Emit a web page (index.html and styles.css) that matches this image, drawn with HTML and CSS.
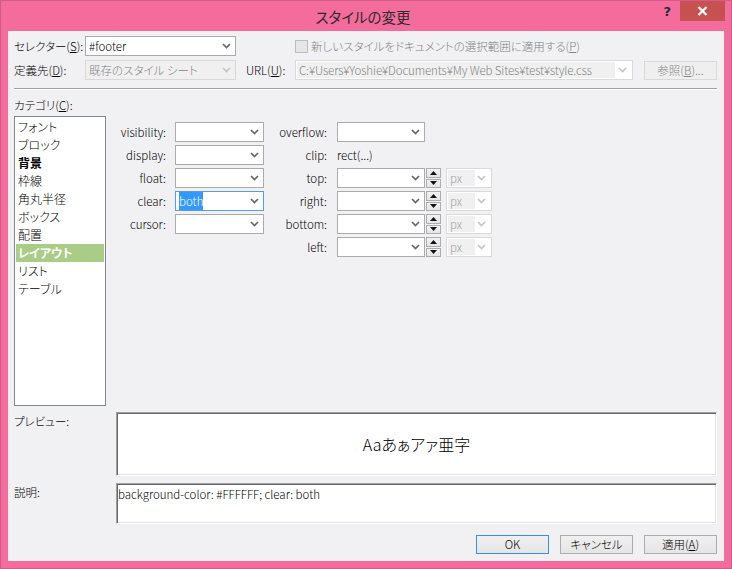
FILE: index.html
```html
<!DOCTYPE html>
<html lang="ja">
<head>
<meta charset="utf-8">
<title>スタイルの変更</title>
<link rel="stylesheet" href="styles.css">
</head>
<body>
<div class="window">
  <div class="titlebar">
    <div></div>
    <div class="title">スタイルの変更</div>
    <div class="controls">
      <span class="help">?</span>
      <span class="close"><svg width="11" height="10" viewBox="0 0 11 10"><path d="M1.5 1l8 8M9.5 1l-8 8" stroke="#fff" stroke-width="2.2" fill="none"/></svg></span>
    </div>
  </div>
  <div class="client">
    <div class="toprows">
      <label class="lbl">セレクター(<u>S</u>):</label>
      <div class="combo"><span class="val">#footer</span><svg class="chev" width="9" height="6" viewBox="0 0 9 6"><path d="M1 1l3.5 3.5L8 1" fill="none" stroke="#666" stroke-width="1.7"/></svg></div>
      <div class="check-wrap"><span class="checkbox"></span><span class="dis">新しいスタイルをドキュメントの選択範囲に適用する(<u>P</u>)</span></div>

      <label class="lbl">定義先(<u>D</u>):</label>
      <div class="combo disabled"><span class="val">既存のスタイル シート</span><svg class="chev" width="9" height="6" viewBox="0 0 9 6"><path d="M1 1l3.5 3.5L8 1" fill="none" stroke="#c4c4c4" stroke-width="1.7"/></svg></div>
      <label class="lbl url-lbl">URL(<u>U</u>):</label>
      <div class="urlbox"><span class="urltext">C:¥Users¥Yoshie¥Documents¥My Web Sites¥test¥style.css</span><svg class="chev" width="9" height="6" viewBox="0 0 9 6"><path d="M1 1l3.5 3.5L8 1" fill="none" stroke="#c4c4c4" stroke-width="1.7"/></svg></div>
      <div class="btn browse">参照(<u>B</u>)...</div>
    </div>

    <div class="sep"></div>

    <div class="catlabel">カテゴリ(<u>C</u>):</div>
    <div class="middle">
      <ul class="catlist">
        <li>フォント</li>
        <li>ブロック</li>
        <li class="bold">背景</li>
        <li>枠線</li>
        <li>角丸半径</li>
        <li>ボックス</li>
        <li>配置</li>
        <li class="sel">レイアウト</li>
        <li>リスト</li>
        <li>テーブル</li>
      </ul>

      <div class="formL">
        <span class="flbl">visibility:</span>
        <div class="combo"><span class="val"></span><svg class="chev" width="9" height="6" viewBox="0 0 9 6"><path d="M1 1l3.5 3.5L8 1" fill="none" stroke="#666" stroke-width="1.7"/></svg></div>
        <span class="flbl">display:</span>
        <div class="combo"><span class="val"></span><svg class="chev" width="9" height="6" viewBox="0 0 9 6"><path d="M1 1l3.5 3.5L8 1" fill="none" stroke="#666" stroke-width="1.7"/></svg></div>
        <span class="flbl">float:</span>
        <div class="combo"><span class="val"></span><svg class="chev" width="9" height="6" viewBox="0 0 9 6"><path d="M1 1l3.5 3.5L8 1" fill="none" stroke="#666" stroke-width="1.7"/></svg></div>
        <span class="flbl">clear:</span>
        <div class="combo focus"><span class="val"><span class="hl">both</span></span><svg class="chev" width="9" height="6" viewBox="0 0 9 6"><path d="M1 1l3.5 3.5L8 1" fill="none" stroke="#666" stroke-width="1.7"/></svg></div>
        <span class="flbl">cursor:</span>
        <div class="combo"><span class="val"></span><svg class="chev" width="9" height="6" viewBox="0 0 9 6"><path d="M1 1l3.5 3.5L8 1" fill="none" stroke="#666" stroke-width="1.7"/></svg></div>
      </div>

      <div class="formR">
        <span class="flbl">overflow:</span>
        <div class="combo r"><span class="val"></span><svg class="chev" width="9" height="6" viewBox="0 0 9 6"><path d="M1 1l3.5 3.5L8 1" fill="none" stroke="#666" stroke-width="1.7"/></svg></div>
        <span></span><span></span>

        <span class="flbl">clip:</span>
        <span class="cliptext">rect(...)</span>
        <span></span><span></span>

        <span class="flbl">top:</span>
        <div class="combo r"><span class="val"></span><svg class="chev" width="9" height="6" viewBox="0 0 9 6"><path d="M1 1l3.5 3.5L8 1" fill="none" stroke="#666" stroke-width="1.7"/></svg></div>
        <div class="spin"><span class="half"><svg width="7" height="4" viewBox="0 0 7 4"><path d="M0 4L3.5 0L7 4z" fill="#111"/></svg></span><span class="half"><svg width="7" height="4" viewBox="0 0 7 4"><path d="M0 0L3.5 4L7 0z" fill="#111"/></svg></span></div>
        <div class="pxsel"><span class="pxval">px</span><svg class="chev" width="9" height="6" viewBox="0 0 9 6"><path d="M1 1l3.5 3.5L8 1" fill="none" stroke="#c4c4c4" stroke-width="1.7"/></svg></div>

        <span class="flbl">right:</span>
        <div class="combo r"><span class="val"></span><svg class="chev" width="9" height="6" viewBox="0 0 9 6"><path d="M1 1l3.5 3.5L8 1" fill="none" stroke="#666" stroke-width="1.7"/></svg></div>
        <div class="spin"><span class="half"><svg width="7" height="4" viewBox="0 0 7 4"><path d="M0 4L3.5 0L7 4z" fill="#111"/></svg></span><span class="half"><svg width="7" height="4" viewBox="0 0 7 4"><path d="M0 0L3.5 4L7 0z" fill="#111"/></svg></span></div>
        <div class="pxsel"><span class="pxval">px</span><svg class="chev" width="9" height="6" viewBox="0 0 9 6"><path d="M1 1l3.5 3.5L8 1" fill="none" stroke="#c4c4c4" stroke-width="1.7"/></svg></div>

        <span class="flbl">bottom:</span>
        <div class="combo r"><span class="val"></span><svg class="chev" width="9" height="6" viewBox="0 0 9 6"><path d="M1 1l3.5 3.5L8 1" fill="none" stroke="#666" stroke-width="1.7"/></svg></div>
        <div class="spin"><span class="half"><svg width="7" height="4" viewBox="0 0 7 4"><path d="M0 4L3.5 0L7 4z" fill="#111"/></svg></span><span class="half"><svg width="7" height="4" viewBox="0 0 7 4"><path d="M0 0L3.5 4L7 0z" fill="#111"/></svg></span></div>
        <div class="pxsel"><span class="pxval">px</span><svg class="chev" width="9" height="6" viewBox="0 0 9 6"><path d="M1 1l3.5 3.5L8 1" fill="none" stroke="#c4c4c4" stroke-width="1.7"/></svg></div>

        <span class="flbl">left:</span>
        <div class="combo r"><span class="val"></span><svg class="chev" width="9" height="6" viewBox="0 0 9 6"><path d="M1 1l3.5 3.5L8 1" fill="none" stroke="#666" stroke-width="1.7"/></svg></div>
        <div class="spin"><span class="half"><svg width="7" height="4" viewBox="0 0 7 4"><path d="M0 4L3.5 0L7 4z" fill="#111"/></svg></span><span class="half"><svg width="7" height="4" viewBox="0 0 7 4"><path d="M0 0L3.5 4L7 0z" fill="#111"/></svg></span></div>
        <div class="pxsel"><span class="pxval">px</span><svg class="chev" width="9" height="6" viewBox="0 0 9 6"><path d="M1 1l3.5 3.5L8 1" fill="none" stroke="#c4c4c4" stroke-width="1.7"/></svg></div>
      </div>
    </div>

    <div class="boxrow preview-row">
      <span class="rowlbl">プレビュー:</span>
      <div class="sunken preview"><span class="sample">Aaあぁアァ亜字</span></div>
    </div>
    <div class="boxrow desc-row">
      <span class="rowlbl">説明:</span>
      <div class="sunken desc">background-color: #FFFFFF; clear: both</div>
    </div>

    <div class="buttons">
      <div class="btn default">OK</div>
      <div class="btn">キャンセル</div>
      <div class="btn">適用(<u>A</u>)</div>
    </div>
  </div>
</div>
</body>
</html>
```

FILE: styles.css
```css
* { box-sizing: border-box; margin: 0; padding: 0; }
html, body { width: 732px; height: 569px; overflow: hidden; }
body {
  font-family: "Noto Sans CJK JP", "Noto Sans", sans-serif;
  font-size: 11.5px;
  font-weight: 300;
  color: #000;
  font-feature-settings: "palt";
  background: #F46C9C;
}
u { text-decoration: underline; text-underline-offset: 1px; }

.window {
  width: 732px;
  height: 569px;
  background: #F46C9C;
  border: 1px solid #D45B87;
  display: flex;
  flex-direction: column;
}

.titlebar {
  height: 30px;
  display: grid;
  grid-template-columns: 1fr auto 1fr;
  padding-right: 6px;
}
.title {
  font-size: 14.5px;
  font-weight: 400;
  color: #2b2b2b;
  line-height: 30px;
  padding-top: 1px;
}
.controls {
  display: flex;
  justify-content: flex-end;
  align-items: flex-start;
}
.help {
  font-family: "DejaVu Sans", sans-serif;
  font-weight: bold;
  font-size: 13px;
  color: #2a2a3a;
  line-height: 20px;
  margin-right: 9px;
  margin-top: 1px;
}
.close {
  width: 45px;
  height: 20px;
  background: #C75050;
  display: flex;
  align-items: center;
  justify-content: center;
}

.client {
  margin: 0 7px 7px 7px;
  height: 530px;
  background: #F1F0F3;
  padding: 5px 7px 0 6px;
  display: flex;
  flex-direction: column;
}

/* top rows */
.toprows {
  display: grid;
  grid-template-columns: 71px 151px 10px 49px 338px 11px 73px;
  grid-template-rows: 20px 20px;
  row-gap: 4px;
  align-items: center;
}
.lbl { line-height: 20px; white-space: nowrap; }
.toprows .combo { grid-column: 2; }
.check-wrap {
  grid-column: 5 / 8;
  display: flex;
  align-items: center;
  gap: 3px;
}
.checkbox {
  width: 13px;
  height: 13px;
  border: 1px solid #BCBCBC;
  background: #E6E6E6;
}
.dis { color: #838383; white-space: nowrap; }
.url-lbl { grid-column: 4; }
.urlbox {
  grid-column: 5;
  height: 20px;
  border: 1px solid #D9D9D9;
  background: #fff;
  display: flex;
  align-items: center;
  padding: 1px 5px 1px 1px;
}
.urltext {
  width: 318px;
  height: 16px;
  background: #F0F0F0;
  color: #838383;
  font-size: 11.5px;
  letter-spacing: -0.1px;
  line-height: 16px;
  padding-left: 2px;
  white-space: nowrap;
  overflow: hidden;
}
.urlbox .chev { margin-left: auto; }
.browse {
  grid-column: 7;
  height: 19px;
  color: #838383;
  border-color: #D9D9D9 !important;
  background: #EFEFEF !important;
}

/* combos */
.combo {
  display: flex;
  align-items: center;
  height: 20px;
  border: 1px solid #ABABAB;
  background: #fff;
  padding: 0 4px 0 3px;
}
.combo .val { flex: 1; white-space: nowrap; overflow: hidden; line-height: 18px; }
.combo.disabled { background: #F0F0F0; border-color: #D9D9D9; color: #838383; }
.combo.focus { border-color: #569DE5; }
.hl { background: #3399FF; color: #fff; padding: 1px 0; }
.chev { flex: none; }

.sep {
  margin-top: 8px;
  height: 2px;
  border-top: 1px solid #A0A0A0;
  border-bottom: 1px solid #FFFFFF;
}

.catlabel {
  margin-top: 7px;
  line-height: 16px;
  height: 16px;
}

.middle {
  margin-top: 3px;
  display: flex;
  align-items: flex-start;
  height: 290px;
}
.catlist {
  list-style: none;
  width: 92px;
  height: 290px;
  border: 1px solid #828790;
  background: #fff;
  padding: 1px;
}
.catlist li {
  height: 18px;
  line-height: 18px;
  padding-left: 2px;
  white-space: nowrap;
  font-size: 12px;
}
.catlist li.bold { font-weight: bold; }
.catlist li.sel { background: #A9CD86; color: #fff; font-weight: bold; }

.formL {
  display: grid;
  grid-template-columns: 60px 89px;
  column-gap: 9px;
  grid-auto-rows: 20px;
  row-gap: 3px;
  padding-top: 6px;
}
.flbl { text-align: right; line-height: 20px; white-space: nowrap; }

.formR {
  display: grid;
  grid-template-columns: 63px 98px 16px 51px;
  grid-auto-rows: 20px;
  row-gap: 3px;
  padding-top: 6px;
}
.formR .combo.r { width: 88px; justify-self: end; }
.cliptext { line-height: 20px; padding-left: 10px; white-space: nowrap; }
.spin {
  width: 15px;
  height: 20px;
  justify-self: end;
  display: flex;
  flex-direction: column;
  gap: 1px;
}
.half {
  flex: 1;
  border: 1px solid #ADADAD;
  background: linear-gradient(#F2F2F2, #E5E5E5);
  display: flex;
  align-items: center;
  justify-content: center;
}
.pxsel {
  width: 46px;
  height: 20px;
  justify-self: end;
  border: 1px solid #D9D9D9;
  background: #fff;
  display: flex;
  align-items: center;
  padding: 1px 5px 1px 1px;
}
.pxval {
  width: 27px;
  height: 16px;
  line-height: 16px;
  background: #F0F0F0;
  color: #A0A0A0;
  padding-left: 2px;
}
.pxsel .chev { margin-left: auto; }

/* preview & description */
.boxrow {
  display: grid;
  grid-template-columns: 102px 601px;
}
.preview-row { margin-top: 6px; height: 64px; }
.desc-row { margin-top: 7px; height: 41px; }
.rowlbl { line-height: 16px; padding-top: 1px; white-space: nowrap; }
.sunken {
  background: #fff;
  border-top: 1px solid #A0A0A0;
  border-left: 1px solid #A0A0A0;
  border-right: 1px solid #FFFFFF;
  border-bottom: 1px solid #FFFFFF;
  box-shadow: inset 1px 1px 0 #696969, inset -1px -1px 0 #E3E3E3;
}
.preview {
  display: flex;
  align-items: center;
  justify-content: center;
}
.sample { font-size: 16px; }
.desc {
  padding: 2px 1px 0 1px;
  line-height: 16px;
  white-space: nowrap;
}

/* buttons */
.buttons {
  margin-top: 11px;
  display: flex;
  justify-content: flex-end;
  gap: 11px;
}
.btn {
  width: 73px;
  height: 19px;
  border: 1px solid #ADADAD;
  background: linear-gradient(#F0F0F0, #E5E5E5);
  display: flex;
  align-items: center;
  justify-content: center;
  white-space: nowrap;
  line-height: 17px;
}
.btn.default { border-color: #3C8FDE; }
```
